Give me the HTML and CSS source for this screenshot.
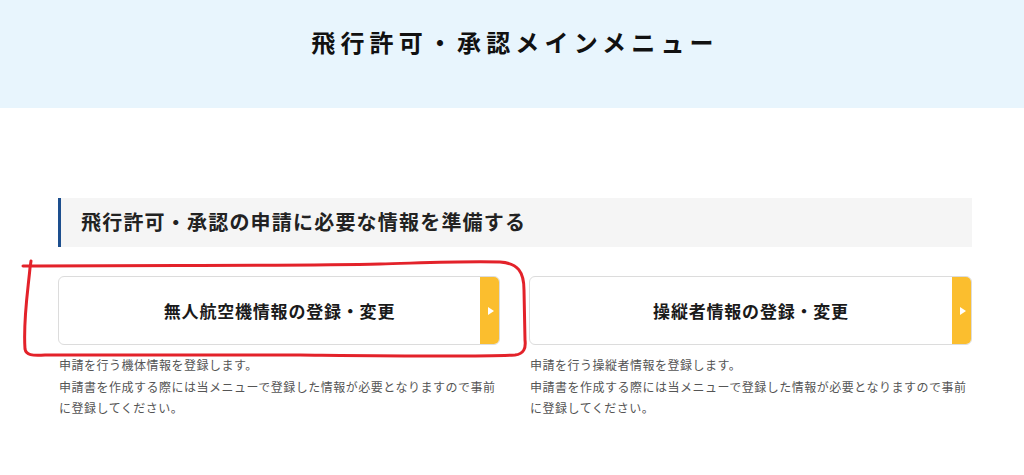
FILE: index.html
```html
<!DOCTYPE html>
<html lang="ja">
<head>
<meta charset="utf-8">
<title>飛行許可・承認メインメニュー</title>
<link rel="stylesheet" href="styles.css">
</head>
<body>
<header class="hero">
  <h1 class="hero-title">飛行許可・承認メインメニュー</h1>
</header>
<main class="content">
  <h2 class="section-heading">飛行許可・承認の申請に必要な情報を準備する</h2>
  <div class="menu-grid">
    <div class="menu-item">
      <a class="menu-button" href="#">
        <span class="menu-label">無人航空機情報の登録・変更</span>
        <span class="menu-tab"><span class="tri"></span></span>
      </a>
      <p class="menu-desc">申請を行う機体情報を登録します。<br>申請書を作成する際には当メニューで登録した情報が必要となりますので事前に登録してください。</p>
    </div>
    <div class="menu-item">
      <a class="menu-button" href="#">
        <span class="menu-label">操縦者情報の登録・変更</span>
        <span class="menu-tab"><span class="tri"></span></span>
      </a>
      <p class="menu-desc">申請を行う操縦者情報を登録します。<br>申請書を作成する際には当メニューで登録した情報が必要となりますので事前に登録してください。</p>
    </div>
  </div>
</main>
<svg class="annotation" width="1024" height="475" viewBox="0 0 1024 475" aria-hidden="true">
  <path d="M 31 261 L 30 268 C 28 290 23 320 25 349 C 26 355 32 356 45 355 L 300 355 C 400 356 480 357 515 355 C 524 354 526 348 525 340 L 524 290 C 524 272 518 263 500 262 C 460 261 420 263 380 264 C 300 266 150 265 23 266" fill="none" stroke="#e3222a" stroke-width="3" stroke-linecap="round" stroke-linejoin="round"/>
</svg>
</body>
</html>
```

FILE: styles.css
```css
* { box-sizing: border-box; }
html, body { margin: 0; padding: 0; }
body {
  background: #ffffff;
  font-family: "Noto Sans CJK JP", "Noto Sans", sans-serif;
  color: #222;
  position: relative;
  width: 1024px;
  height: 475px;
  overflow: hidden;
}
.hero {
  background: #e8f5fd;
  height: 108px;
  padding-top: 22px;
  text-align: center;
}
.hero-title {
  margin: 0;
  font-size: 24px;
  line-height: 40px;
  font-weight: 700;
  letter-spacing: 5.15px;
  color: #111;
  padding-left: 6px;
}
.content {
  width: 914px;
  margin-left: 58px;
  padding-top: 90px;
}
.section-heading {
  margin: 0;
  height: 49px;
  background: #f5f5f5;
  border-left: 3px solid #1d4f8e;
  padding-left: 20px;
  font-size: 20px;
  font-weight: 700;
  line-height: 47px;
  letter-spacing: 1.2px;
  color: #222;
}
.menu-grid {
  margin-top: 29px;
  display: grid;
  grid-template-columns: 442px 443px;
  column-gap: 29px;
}
.menu-button {
  display: flex;
  height: 69px;
  border: 1px solid #dcdcdc;
  border-radius: 6px;
  overflow: hidden;
  text-decoration: none;
  color: #1a1a1a;
  background: #fff;
}
.menu-label {
  flex: 1;
  display: flex;
  align-items: center;
  justify-content: center;
  padding-left: 20px;
  font-size: 17px;
  font-weight: 700;
  letter-spacing: 0.8px;
}
.menu-tab {
  width: 19px;
  background: #fbbe2e;
  display: flex;
  align-items: center;
  justify-content: center;
}
.tri {
  width: 0;
  height: 0;
  border-top: 4px solid transparent;
  border-bottom: 4px solid transparent;
  border-left: 6px solid #fff;
  margin-left: 2px;
}
.menu-desc {
  margin: 9px 0 0 1px;
  font-size: 12px;
  line-height: 21.6px;
  letter-spacing: 0.5px;
  color: #555;
}
.annotation {
  position: absolute;
  left: 0;
  top: 0;
  pointer-events: none;
}
```
